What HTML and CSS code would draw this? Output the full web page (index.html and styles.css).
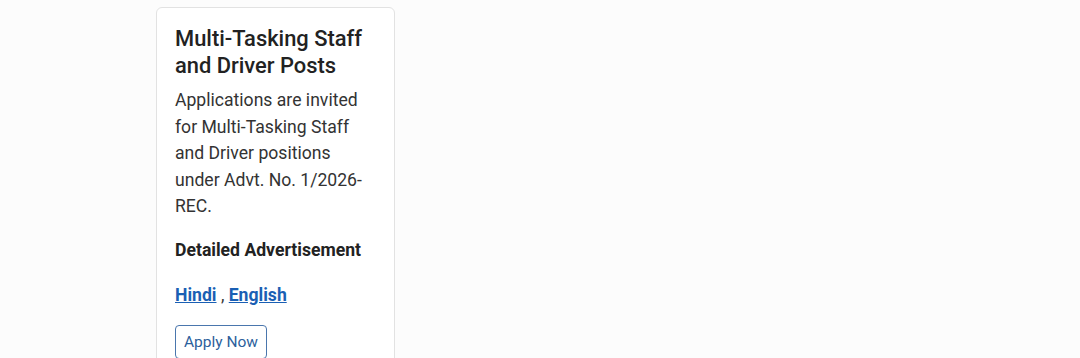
FILE: index.html
```html
<!doctype html>
<html lang="en">

<head>
  <meta charset="UTF-8" />
  <meta name="viewport" content="width=device-width, initial-scale=1.0" />
  <title>Recruitment</title>
  <link rel="stylesheet" href="styles.css">
</head>

<body>
  <div class="page">
    <div class="card-grid">
      <div class="card">
        <h3 class="card-title">Multi-Tasking Staff and Driver Posts</h3>
        <p class="card-text">Applications are invited for Multi-Tasking Staff and Driver positions under Advt. No. 1/2026-REC.</p>
        <div class="card-label">Detailed Advertisement</div>
        <div class="card-links">
          <a href="#" class="doc-link">Hindi</a> , <a href="#" class="doc-link">English</a>
        </div>
        <a href="#" class="apply-btn">Apply Now</a>
      </div>
    </div>
  </div>
</body>

</html>
```

FILE: styles.css
```css
* {
  margin: 0;
  padding: 0;
  box-sizing: border-box;
  font-family: 'Roboto', 'Liberation Sans', sans-serif;
}

body {
  background-color: #fcfcfc;
  height: 100vh;
  overflow: hidden;
}

.page {
  padding: 7px 0 0 156px;
}

.card-grid {
  display: grid;
  grid-template-columns: 239px;
  gap: 24px;
}

.card {
  background-color: #ffffff;
  border: 1px solid #e2e2e2;
  border-radius: 6px;
  padding: 17px 18px 20px;
  display: flex;
  flex-direction: column;
  align-items: flex-start;
}

.card-title {
  font-size: 21.9px;
  font-weight: 500;
  line-height: 27px;
  color: #222;
  margin-bottom: 8px;
}

.card-text {
  font-size: 17.6px;
  line-height: 26.6px;
  color: #333;
  margin-bottom: 17px;
}

.card-label {
  font-size: 17.6px;
  font-weight: 700;
  color: #222;
  line-height: 26px;
  margin-bottom: 19px;
}

.card-links {
  font-size: 17.6px;
  line-height: 26px;
  color: #333;
  margin-bottom: 17px;
}

.doc-link {
  color: #1a5fb4;
  font-weight: 700;
  text-decoration: underline;
}

.apply-btn {
  display: inline-block;
  font-size: 15.5px;
  color: #2c5f9c;
  text-decoration: none;
  border: 1px solid #4a76ad;
  border-radius: 4px;
  padding: 7px 8px;
}
```
